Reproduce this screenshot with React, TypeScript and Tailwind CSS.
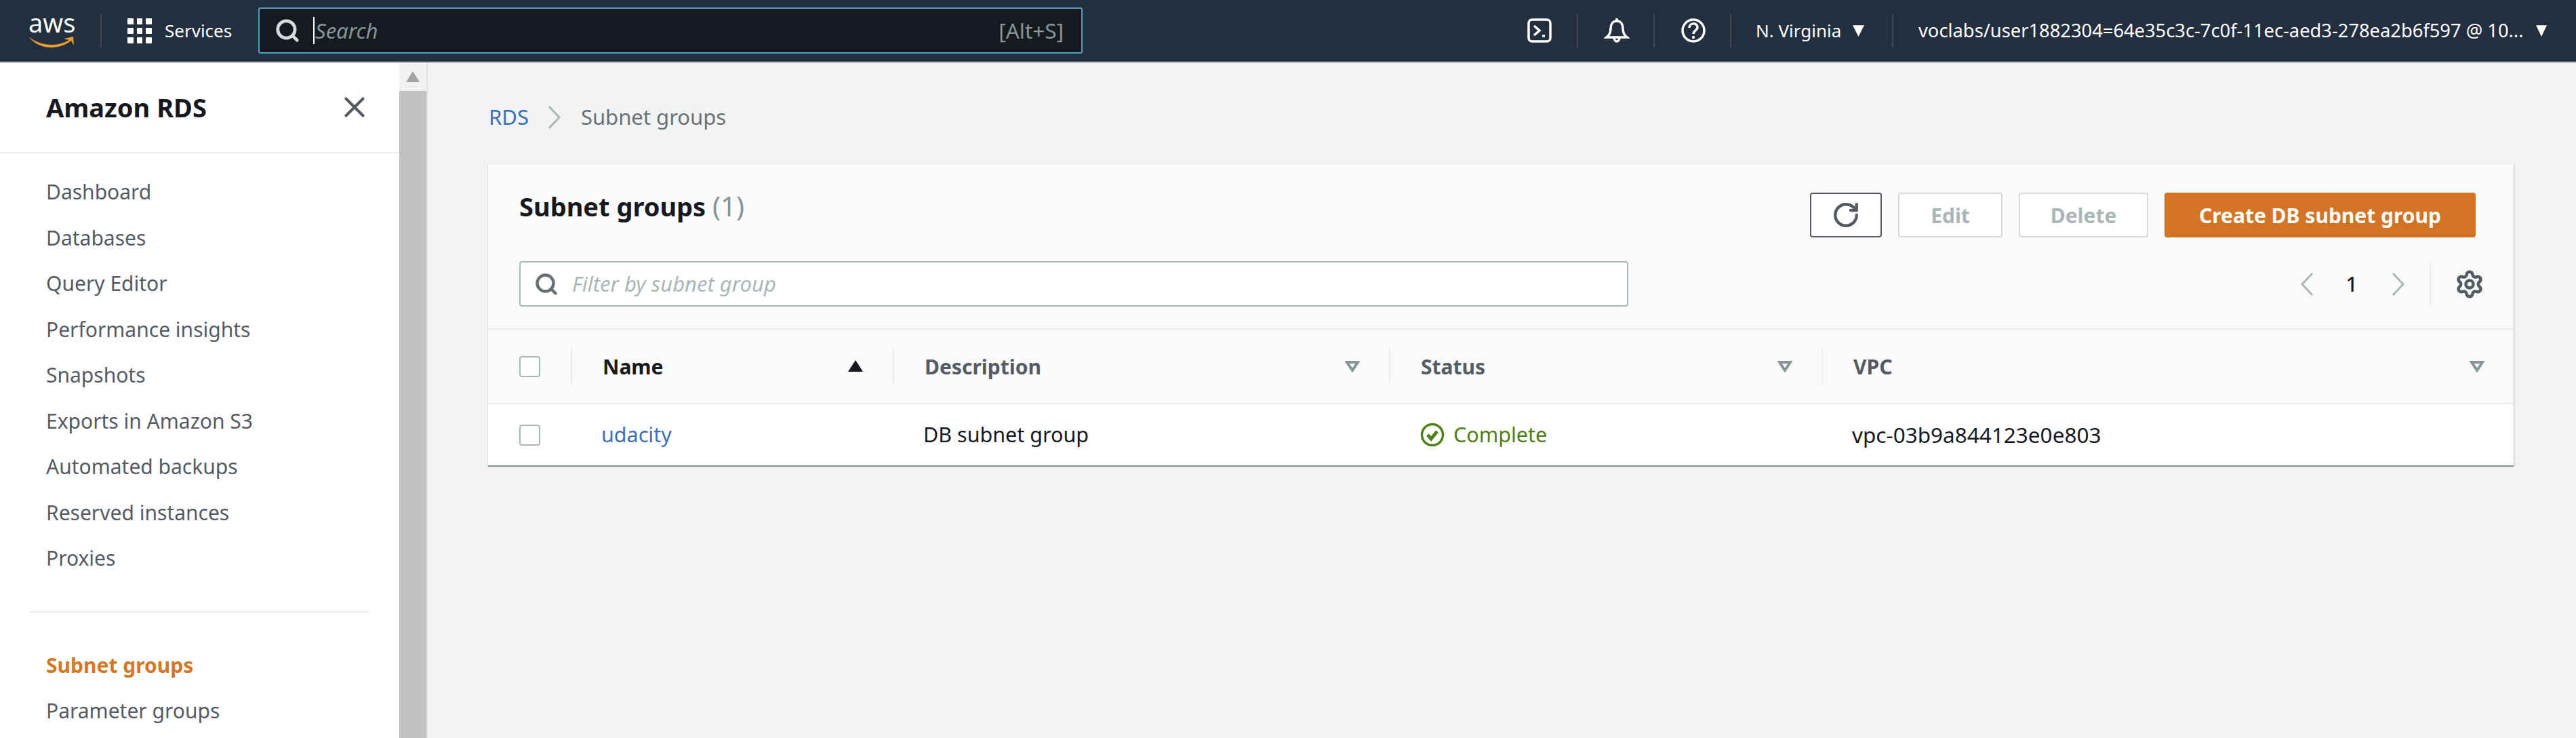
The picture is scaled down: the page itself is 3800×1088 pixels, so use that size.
import { RotateCw, Settings, Search, X } from "lucide-react";

const navTop = [
  "Dashboard",
  "Databases",
  "Query Editor",
  "Performance insights",
  "Snapshots",
  "Exports in Amazon S3",
  "Automated backups",
  "Reserved instances",
  "Proxies",
];

function Caret({ className }: { className: string }) {
  return (
    <svg viewBox="0 0 16 16" preserveAspectRatio="none" className={className}>
      <path d="M0 1h16L8 16z" fill="currentColor" />
    </svg>
  );
}

function Chevron({ left = false, className = "" }: { left?: boolean; className?: string }) {
  return (
    <svg viewBox="0 0 20 34" className={`h-[34px] w-[20px] shrink-0 ${className}`} fill="none" stroke="#aab7b8" strokeWidth="3">
      <path d={left ? "M18 1L3 17l15 16" : "M2 1l15 16L2 33"} />
    </svg>
  );
}

function HeaderSep({ className = "" }: { className?: string }) {
  return <div className={`h-[50px] w-[2px] shrink-0 bg-[#414750] ${className}`} />;
}

function TopBar() {
  return (
    <header className="flex h-[92px] shrink-0 items-center border-b-2 border-[#545b64] bg-[#232f3e] text-white">
      <div className="relative ml-[42px] h-[46px] w-[68px] shrink-0">
        <span className="absolute left-0 top-[-11px] text-[38px] leading-[44px]">aws</span>
        <svg viewBox="0 0 68 18" className="absolute bottom-[-2px] left-0 h-[18px] w-[68px]">
          <path d="M0 2c10 8 22 12 34 12 11 0 19-3 26-7l-8-2 14-3 1 13-4-7C52 16 42 18 33 18 20 18 8 12 0 2z" fill="#ec9c2c" />
        </svg>
      </div>
      <HeaderSep className="ml-[38px]" />
      <div className="ml-[38px] grid w-[36px] shrink-0 grid-cols-3 gap-[5px]">
        {Array.from({ length: 9 }).map((_, i) => (
          <div key={i} className="h-[9px] rounded-[1px] bg-white" />
        ))}
      </div>
      <span className="ml-[19px] w-[138px] shrink-0 text-[26px]">Services</span>
      <div className="flex h-[68px] w-[1216px] shrink-0 items-center rounded-[3px] border-2 border-[#539fc8] bg-[#16191f] pl-[22px] pr-[26px]">
        <Search className="h-[38px] w-[38px] shrink-0 text-[#d5dbdb]" strokeWidth={3} />
        <div className="ml-[19px] h-[40px] w-[2px] shrink-0 bg-white" />
        <span className="ml-[1px] text-[31px] italic text-[#879596]">Search</span>
        <span className="ml-auto text-[31.5px] text-[#879596]">[Alt+S]</span>
      </div>
      <svg viewBox="0 0 36 36" className="ml-[656px] h-[36px] w-[36px] shrink-0" fill="none" stroke="white" strokeWidth="3.5">
        <rect x="2" y="2" width="32" height="32" rx="5" />
        <path d="M10 11l8 7-8 7M22 26h4" />
      </svg>
      <HeaderSep className="ml-[37px]" />
      <svg viewBox="0 0 38 38" className="ml-[38px] h-[38px] w-[38px] shrink-0" fill="none" stroke="white" strokeWidth="3.5">
        <path d="M19 5c-6 0-9 5-9 11 0 6-2 10-6 13h30c-4-3-6-7-6-13 0-6-3-11-9-11zM19 1v4M15 29c0 8 8 8 8 0" />
      </svg>
      <HeaderSep className="ml-[35px]" />
      <svg viewBox="0 0 36 36" className="ml-[39px] h-[36px] w-[36px] shrink-0" fill="none" stroke="white" strokeWidth="3.5">
        <circle cx="18" cy="18" r="16" />
        <path d="M12 14c0-8 12-8 12-1 0 5-6 5-6 10M18 26v4" />
      </svg>
      <HeaderSep className="ml-[36px]" />
      <span className="ml-[36px] w-[131px] shrink-0 whitespace-nowrap text-[26px]">N. Virginia</span>
      <Caret className="ml-[12px] h-[18px] w-[17px] shrink-0 text-white" />
      <HeaderSep className="ml-[41px]" />
      <span className="ml-[37px] w-[898px] shrink-0 whitespace-nowrap text-[27.3px]">
        voclabs/user1882304=64e35c3c-7c0f-11ec-aed3-278ea2b6f597 @ 10...
      </span>
      <Caret className="ml-[13px] h-[18px] w-[16px] shrink-0 text-white" />
    </header>
  );
}

function Sidebar() {
  return (
    <aside className="flex w-[589px] shrink-0 flex-col bg-white">
      <div className="flex h-[134px] shrink-0 items-center justify-between border-b-2 border-[#eaeded] pl-[68px] pr-[41px]">
        <h2 className="text-[38px] font-bold leading-none text-[#16191f]">Amazon RDS</h2>
        <X className="h-[50px] w-[50px] text-[#545b64]" strokeWidth={2} />
      </div>
      <nav className="flex flex-col pt-[23px]">
        {navTop.map((item) => (
          <a key={item} className="flex h-[67.5px] items-center pl-[68px] text-[30px] text-[#545b64]">
            {item}
          </a>
        ))}
      </nav>
      <div className="mx-[45px] mt-[44px] h-[2px] bg-[#eaeded]" />
      <div className="flex flex-col pt-[44px]">
        <a className="flex h-[67.5px] items-center pl-[68px] text-[30px] font-bold text-[#d47726]">Subnet groups</a>
        <a className="flex h-[67.5px] items-center pl-[68px] text-[30px] text-[#545b64]">Parameter groups</a>
      </div>
    </aside>
  );
}

function Scrollbar() {
  return (
    <div className="flex w-[42px] shrink-0 flex-col border-r-2 border-[#dfe1e1] bg-[#f1f1f1]">
      <div className="flex h-[42px] shrink-0 items-center justify-center">
        <div className="h-0 w-0 border-x-[10px] border-b-[16px] border-x-transparent border-b-[#a3a3a3]" />
      </div>
      <div className="flex-1 bg-[#c1c1c1]" />
    </div>
  );
}

function SortDown({ className = "" }: { className?: string }) {
  return (
    <svg viewBox="0 0 22 18" className={`h-[18px] w-[22px] shrink-0 ${className}`} fill="none" stroke="#879596" strokeWidth="4">
      <path d="M3 3h16l-8 12z" />
    </svg>
  );
}

function ColSep() {
  return <div className="h-[54px] w-[2px] shrink-0 bg-[#eaeded]" />;
}

function Check({ className = "" }: { className?: string }) {
  return <div className={`h-[31px] w-[31px] shrink-0 rounded-[4px] border-2 border-[#aab7b8] bg-white ${className}`} />;
}

function SubnetCard() {
  return (
    <section className="border-t border-[#eaeded] bg-[#fafafa] shadow-[0_2px_1px_#879596,1px_1px_2px_rgba(0,28,36,0.2)]">
      <div className="flex h-[244px] flex-col border-b-2 border-[#eaeded] pl-[46px] pr-[43px]">
        <div className="flex h-[108px] shrink-0 items-end justify-between pr-[13px]">
          <h1 className="mb-[7px] h-[64px] text-[38px] font-bold leading-[50px] text-[#16191f]">
            Subnet groups <span className="text-[40px] font-normal text-[#879596]">(1)</span>
          </h1>
          <div className="flex gap-[24px] text-[30px] font-bold">
            <button className="flex h-[66px] w-[106px] items-center justify-center rounded-[4px] border-2 border-[#545b64] bg-white text-[#545b64]">
              <RotateCw className="h-[42px] w-[42px]" strokeWidth={2.5} />
            </button>
            <button className="h-[66px] w-[154px] rounded-[4px] border-2 border-[#d5dbdb] bg-white text-[#aab7b8]">Edit</button>
            <button className="h-[66px] w-[191px] rounded-[4px] border-2 border-[#d5dbdb] bg-white text-[#aab7b8]">Delete</button>
            <button className="h-[66px] w-[459px] rounded-[4px] bg-[#d27423] text-white">Create DB subnet group</button>
          </div>
        </div>
        <div className="mt-[35px] flex items-center">
          <div className="flex h-[67px] w-[1636px] shrink-0 items-center rounded-[4px] border-2 border-[#aab7b8] bg-white pl-[20px]">
            <Search className="h-[36px] w-[36px] shrink-0 text-[#687078]" strokeWidth={3} />
            <span className="ml-[20px] text-[31px] italic text-[#aab7b8]">Filter by subnet group</span>
          </div>
          <Chevron left className="ml-[991px]" />
          <span className="ml-[33px] w-[46px] text-center text-[30px] font-medium text-[#16191f]">1</span>
          <Chevron className="ml-[36px]" />
          <div className="ml-[36px] h-[67px] w-[2px] bg-[#eaeded]" />
          <Settings className="ml-[35px] h-[44px] w-[44px] shrink-0 text-[#545b64]" strokeWidth={2.5} />
        </div>
      </div>

      <div className="flex h-[110px] items-center border-b-2 border-[#eaeded] pl-[46px] text-[30px] font-bold text-[#545b64]">
        <Check />
        <div className="ml-[45px]"><ColSep /></div>
        <span className="ml-[45px] w-[362px] text-[#16191f]">Name</span>
        <Caret className="h-[18px] w-[22px] shrink-0 rotate-180 text-[#16191f]" />
        <div className="ml-[44px]"><ColSep /></div>
        <span className="ml-[45px] w-[620px]">Description</span>
        <SortDown />
        <div className="ml-[43px]"><ColSep /></div>
        <span className="ml-[45px] w-[526px]">Status</span>
        <SortDown />
        <div className="ml-[43px]"><ColSep /></div>
        <span className="ml-[45px] w-[909px]">VPC</span>
        <SortDown />
      </div>

      <div className="flex h-[90px] items-center bg-white pl-[46px] text-[30.5px] text-[#16191f]">
        <Check />
        <a className="ml-[90px] w-[475px] text-[#3f6fb8]">udacity</a>
        <span className="w-[733px]">DB subnet group</span>
        <div className="flex w-[637px] items-center text-[#4f7f17]">
          <svg viewBox="0 0 36 36" className="h-[36px] w-[36px] shrink-0" fill="none" stroke="currentColor">
            <circle cx="18" cy="18" r="15.5" strokeWidth="3.5" />
            <path d="M11 18l5 6 9-11" strokeWidth="5" />
          </svg>
          <span className="ml-[13px]">Complete</span>
        </div>
        <span className="text-[31.5px]">vpc-03b9a844123e0e803</span>
      </div>
    </section>
  );
}

export default function App() {
  return (
    <div className="flex h-[1088px] w-[3800px] flex-col overflow-hidden bg-[#f2f3f3] font-['Noto_Sans','Open_Sans',sans-serif]">
      <TopBar />
      <div className="flex min-h-0 flex-1">
        <Sidebar />
        <Scrollbar />
        <main className="min-w-0 flex-1 pl-[89px] pr-[92px]">
          <div className="flex h-[149px] items-center pl-[1px] pt-[12px] text-[31px]">
            <a className="text-[#3f6fb8]">RDS</a>
            <Chevron className="ml-[28px]" />
            <span className="ml-[29px] text-[#687078]">Subnet groups</span>
          </div>
          <SubnetCard />
        </main>
      </div>
    </div>
  );
}
